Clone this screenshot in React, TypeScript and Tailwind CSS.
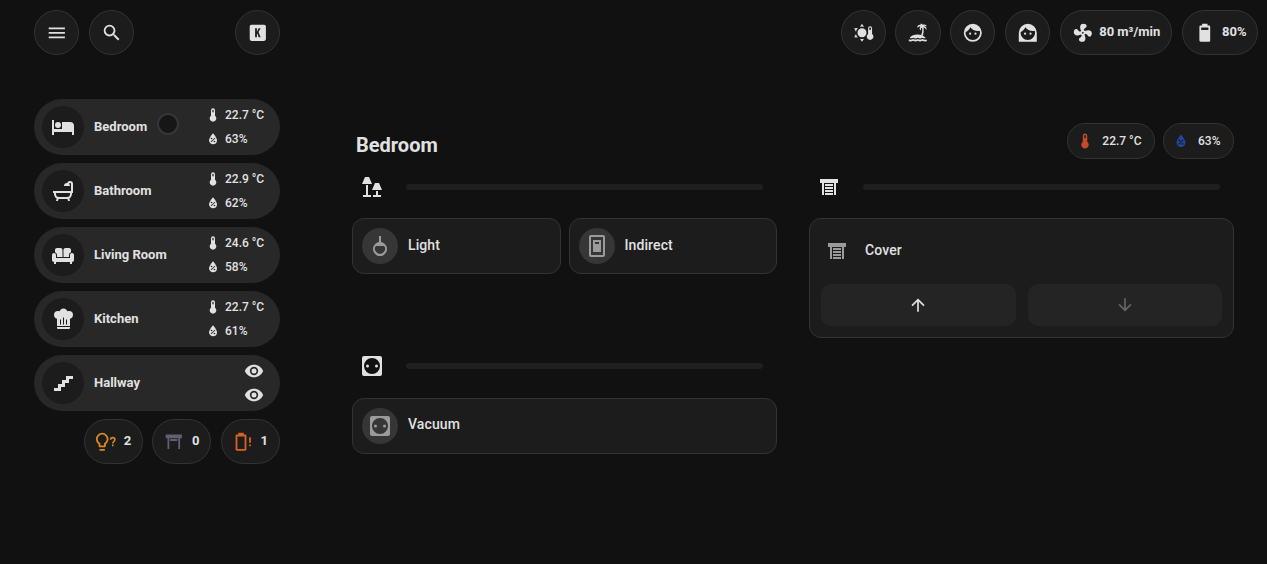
import type { ReactNode } from "react";

const paths = {
  menu: "M3,6H21V8H3V6M3,11H21V13H3V11M3,16H21V18H3V16Z",
  magnify:
    "M9.5,3A6.5,6.5 0 0,1 16,9.5C16,11.11 15.41,12.59 14.44,13.73L14.71,14H15.5L20.5,19L19,20.5L14,15.5V14.71L13.73,14.44C12.59,15.41 11.11,16 9.5,16A6.5,6.5 0 0,1 3,9.5A6.5,6.5 0 0,1 9.5,3M9.5,5C7,5 5,7 5,9.5C5,12 7,14 9.5,14C12,14 14,12 14,9.5C14,7 12,5 9.5,5Z",
  keyBox:
    "M5,3H19A2,2 0 0,1 21,5V19A2,2 0 0,1 19,21H5A2,2 0 0,1 3,19V5A2,2 0 0,1 5,3M9,7V17H11V13.67L11.5,12.8L13,17H15.1L12.8,11L15.1,7H13L11,10.8V7H9Z",
  sunThermo:
    "M10,7A5,5 0 1,1 10,17A5,5 0 1,1 10,7M10,2L12.3,5.5A7,7 0 0,0 7.7,5.5L10,2M10,22L12.3,18.5A7,7 0 0,1 7.7,18.5L10,22M1.3,7L5.5,6.7A7,7 0 0,0 3.3,10.7L1.3,7M1.3,17L5.5,17.3A7,7 0 0,1 3.3,13.3L1.3,17M21.2,13.2V7A2.2,2.2 0 0,0 16.8,7V13.2A3.7,3.7 0 1,0 21.2,13.2M19,6A1,1 0 0,1 20,7V8.5H18V7A1,1 0 0,1 19,6Z",
  island:
    "M15,2C16.3,1.6 17.2,2.3 17.6,3.2C19,2.4 21.2,2.7 22,5C20.7,4.2 19.8,4.2 19,4.4C21,4.9 22.3,6.5 21.5,9C20.8,7.2 19.6,6.2 18.3,5.8C18.8,8.6 18.5,11.8 17.7,15H15.6C16.8,11.9 17.3,8.7 16.7,6C15.7,6.8 15.2,8 15.2,9.6C13.5,7.8 14,6 15,5C13.3,4.8 12.2,5.5 11.4,6.6C11.2,4.2 13,2.9 15.2,3.2L15,2M3,17.5C5,14.8 8,13.8 11.5,13.8C15.5,13.8 18.8,15 20.8,17.7C19.4,18.4 18.3,18.2 17,17.4C15.3,18.6 13.6,18.6 12,17.4C10.3,18.6 8.6,18.6 7,17.4C5.6,18.3 4.3,18.4 3,17.5M2,19.5C3.7,19.8 5.2,19.7 7,18.8C8.7,19.8 10.4,19.8 12,18.8C13.7,19.8 15.4,19.8 17,18.8C18.7,19.7 20.3,19.9 22,19.5V21.5C20.3,21.8 18.7,21.7 17,20.9C15.4,21.8 13.7,21.8 12,20.9C10.4,21.8 8.7,21.8 7,20.9C5.3,21.7 3.7,21.8 2,21.5Z",
  man: "M9,11.75A1.25,1.25 0 0,0 7.75,13A1.25,1.25 0 0,0 9,14.25A1.25,1.25 0 0,0 10.25,13A1.25,1.25 0 0,0 9,11.75M15,11.75A1.25,1.25 0 0,0 13.75,13A1.25,1.25 0 0,0 15,14.25A1.25,1.25 0 0,0 16.25,13A1.25,1.25 0 0,0 15,11.75M12,2A10,10 0 0,0 2,12A10,10 0 0,0 12,22A10,10 0 0,0 22,12A10,10 0 0,0 12,2M12,20C7.59,20 4,16.41 4,12C4,11.71 4,11.42 4.05,11.14C6.41,10.09 8.28,8.16 9.26,5.77C11.07,8.33 14.05,10 17.42,10C18.2,10 18.95,9.91 19.67,9.74C19.88,10.45 20,11.21 20,12C20,16.41 16.41,20 12,20Z",
  woman:
    "M9,11.75A1.25,1.25 0 0,0 7.75,13A1.25,1.25 0 0,0 9,14.25A1.25,1.25 0 0,0 10.25,13A1.25,1.25 0 0,0 9,11.75M15,11.75A1.25,1.25 0 0,0 13.75,13A1.25,1.25 0 0,0 15,14.25A1.25,1.25 0 0,0 16.25,13A1.25,1.25 0 0,0 15,11.75M12,2A10,10 0 0,0 2,12V22H22V12A10,10 0 0,0 12,2M12,20C7.59,20 4,16.41 4,12C4,11.71 4,11.42 4.05,11.14C6.41,10.09 8.28,8.16 9.26,5.77C11.07,8.33 14.05,10 17.42,10C18.2,10 18.95,9.91 19.67,9.74C19.88,10.45 20,11.21 20,12C20,16.41 16.41,20 12,20Z",
  fan: "M12,11A1,1 0 0,0 11,12A1,1 0 0,0 12,13A1,1 0 0,0 13,12A1,1 0 0,0 12,11M12.5,2C17,2 17.11,5.57 14.75,6.75C13.76,7.24 13.32,8.29 13.13,9.22C13.61,9.42 14.03,9.73 14.35,10.13C18.05,8.13 22.03,8.92 22.03,12.5C22.03,17 18.46,17.1 17.28,14.73C16.78,13.74 15.72,13.3 14.79,13.11C14.59,13.59 14.28,14 13.88,14.34C15.87,18.03 15.08,22 11.5,22C7,22 6.91,18.42 9.27,17.24C10.25,16.75 10.69,15.71 10.89,14.79C10.4,14.59 9.97,14.27 9.65,13.87C5.96,15.85 2,15.07 2,11.5C2,7 5.56,6.89 6.74,9.26C7.24,10.25 8.29,10.68 9.22,10.87C9.41,10.39 9.73,9.97 10.14,9.65C8.15,5.96 8.94,2 12.5,2Z",
  battery:
    "M16,9H8V6H16M16.67,4H15V2H9V4H7.33A1.33,1.33 0 0,0 6,5.33V20.67C6,21.4 6.6,22 7.33,22H16.67A1.33,1.33 0 0,0 18,20.67V5.33C18,4.6 17.4,4 16.67,4Z",
  thermometer:
    "M15,13V5A3,3 0 0,0 9,5V13A5,5 0 1,0 15,13M12,4A1,1 0 0,1 13,5V8H11V5A1,1 0 0,1 12,4Z",
  humidity:
    "M12,3.25C12,3.25 6,10 6,14C6,17.32 8.69,20 12,20A6,6 0 0,0 18,14C18,10 12,3.25 12,3.25M14.47,9.97L15.53,11.03L9.53,17.03L8.47,15.97M9.75,10A1.25,1.25 0 0,1 11,11.25A1.25,1.25 0 0,1 9.75,12.5A1.25,1.25 0 0,1 8.5,11.25A1.25,1.25 0 0,1 9.75,10M14.25,14.5A1.25,1.25 0 0,1 15.5,15.75A1.25,1.25 0 0,1 14.25,17A1.25,1.25 0 0,1 13,15.75A1.25,1.25 0 0,1 14.25,14.5Z",
  bed: "M19,7H11V14H3V5H1V20H3V17H21V20H23V11A4,4 0 0,0 19,7M7,13A3,3 0 0,0 10,10A3,3 0 0,0 7,7A3,3 0 0,0 4,10A3,3 0 0,0 7,13Z",
  bath: "M21,14V15C21,16.91 19.93,18.57 18.35,19.41L19,22H17L16.5,20C16.33,20 16.17,20 16,20H8C7.83,20 7.67,20 7.5,20L7,22H5L5.65,19.41C4.07,18.57 3,16.91 3,15V14H2V12H20V5A1,1 0 0,0 19,4C18.5,4 18.12,4.34 18,4.79C18.63,5.33 19,6.13 19,7H13A3,3 0 0,1 16,4C16.06,4 16.11,4 16.17,4C16.58,2.84 17.69,2 19,2A3,3 0 0,1 22,5V14H21M19,14H5V15A3,3 0 0,0 8,18H16A3,3 0 0,0 19,15V14Z",
  sofa: "M12.5,7C12.5,5.89 13.39,5 14.5,5H18C19.1,5 20,5.9 20,7V9.16C18.84,9.57 18,10.67 18,11.97V14H12.5V7M6,11.96V14H11.5V7C11.5,5.89 10.61,5 9.5,5H6C4.9,5 4,5.9 4,7V9.15C5.16,9.56 6,10.67 6,11.96M20.66,10.03C19.68,10.19 19,11.12 19,12.12V15H5V12C5,10.9 4.11,10 3,10S1,10.9 1,12V17C1,18.1 1.9,19 3,19V21H5V19H19V21H21V19C22.1,19 23,18.1 23,17V12C23,10.79 21.91,9.82 20.66,10.03Z",
  chef: "M12.5,1.5C10.73,1.5 9.17,2.67 8.67,4.37C8.14,4.13 7.58,4 7,4A4,4 0 0,0 3,8C3,9.82 4.24,11.41 6,11.87V19H19V11.87C20.76,11.41 22,9.82 22,8A4,4 0 0,0 18,4C17.42,4 16.86,4.13 16.33,4.37C15.83,2.67 14.27,1.5 12.5,1.5M12,10.5H13V17.5H12V10.5M9,12.5H10V17.5H9V12.5M15,12.5H16V17.5H15V12.5M6,20V21A1,1 0 0,0 7,22H18A1,1 0 0,0 19,21V20H6Z",
  stairs: "M15,5V9H11V13H7V17H3V20H10V16H14V12H18V8H22V5H15Z",
  eye: "M12,9A3,3 0 0,0 9,12A3,3 0 0,0 12,15A3,3 0 0,0 15,12A3,3 0 0,0 12,9M12,17A5,5 0 0,1 7,12A5,5 0 0,1 12,7A5,5 0 0,1 17,12A5,5 0 0,1 12,17M12,4.5C7,4.5 2.73,7.61 1,12C2.73,16.39 7,19.5 12,19.5C17,19.5 21.27,16.39 23,12C21.27,7.61 17,4.5 12,4.5Z",
  bulbQuestion:
    "M8,2A7,7 0 0,1 15,9C15,11.38 13.81,13.47 12,14.74V17A1,1 0 0,1 11,18H5A1,1 0 0,1 4,17V14.74C2.19,13.47 1,11.38 1,9A7,7 0 0,1 8,2M5,21V20H11V21A1,1 0 0,1 10,22H6A1,1 0 0,1 5,21M8,4A5,5 0 0,0 3,9C3,11.05 4.23,12.81 6,13.58V16H10V13.58C11.77,12.81 13,11.05 13,9A5,5 0 0,0 8,4M18.9,15H20.7V17H18.9V15M16.4,9.7A3.3,3.3 0 0,1 23,9.7C23,11.7 20.7,12 20.7,14H18.9C18.9,11.4 21.2,11.2 21.2,9.7A1.5,1.5 0 0,0 18.2,9.7Z",
  shutterOpen: "M3,4H21V8H19V20H17V8H7V20H5V8H3V4M8,9H16V11H8V9Z",
  shutter:
    "M3,4H21V8H19V20H17V8H7V20H5V8H3V4M8,9H16V11H8V9M8,12H16V14H8V12M8,15H16V17H8V15M8,18H16V20H8V18Z",
  batteryAlert:
    "M14,20H6V6H14M14.67,4H13V2H7V4H5.33C4.6,4 4,4.6 4,5.33V20.67C4,21.4 4.6,22 5.33,22H14.67C15.4,22 16,21.4 16,20.67V5.33C16,4.6 15.4,4 14.67,4M21,7H19V13H21V7M21,15H19V17H21V15Z",
  lamps:
    "M5,2H9L12,9H2L5,2M6,10H8V20H11V22H3V20H6V10M15,8H19L22,15H12L15,8M16,16H18V20H21V22H13V20H16V16Z",
  outlet:
    "M4,2H20A2,2 0 0,1 22,4V20A2,2 0 0,1 20,22H4A2,2 0 0,1 2,20V4A2,2 0 0,1 4,2M12,4A8,8 0 0,0 4,12A8,8 0 0,0 12,20A8,8 0 0,0 20,12A8,8 0 0,0 12,4M7.5,10.5A1.5,1.5 0 1,1 7.5,13.5A1.5,1.5 0 1,1 7.5,10.5M16.5,10.5A1.5,1.5 0 1,1 16.5,13.5A1.5,1.5 0 1,1 16.5,10.5Z",
  pendant:
    "M11,2H13V8.07A7,7 0 1,1 11,8.07V2M7.8,12A5,5 0 1,0 16.2,12H7.8Z",
  wallSwitch:
    "M6,1H18A2,2 0 0,1 20,3V21A2,2 0 0,1 18,23H6A2,2 0 0,1 4,21V3A2,2 0 0,1 6,1M6,3V21H18V3H6M8,6H16V18H8V6M10,8V10H14V8H10Z",
  up: "M13,20H11V8L5.5,13.5L4.08,12.08L12,4.16L19.92,12.08L18.5,13.5L13,8V20Z",
  down: "M11,4H13V16L18.5,10.5L19.92,11.92L12,19.84L4.08,11.92L5.5,10.5L11,16V4Z",
};

type IconName = keyof typeof paths;

function Icon({ name, className = "size-6" }: { name: IconName; className?: string }) {
  return (
    <svg viewBox="0 0 24 24" fill="currentColor" fillRule="evenodd" className={`block shrink-0 ${className}`}>
      <path d={paths[name]} />
    </svg>
  );
}

const chip = "flex h-[45px] shrink-0 items-center rounded-full border border-[#333333] bg-[#1c1c1c]";

function RoundButton({ icon, width = "w-[45px]" }: { icon: IconName; width?: string }) {
  return (
    <button className={`${chip} ${width} justify-center`}>
      <Icon name={icon} className="size-[21.6px]" />
    </button>
  );
}

type Room = { name: string; icon: IconName; temperature?: string; humidity?: string; dot?: boolean };

const rooms: Room[] = [
  { name: "Bedroom", icon: "bed", temperature: "22.7 °C", humidity: "63%", dot: true },
  { name: "Bathroom", icon: "bath", temperature: "22.9 °C", humidity: "62%" },
  { name: "Living Room", icon: "sofa", temperature: "24.6 °C", humidity: "58%" },
  { name: "Kitchen", icon: "chef", temperature: "22.7 °C", humidity: "61%" },
  { name: "Hallway", icon: "stairs" },
];

function Reading({ icon, value }: { icon: IconName; value: string }) {
  return (
    <div className="flex h-6 items-center gap-1">
      <Icon name={icon} className="size-4" />
      <span className="text-xs font-medium">{value}</span>
    </div>
  );
}

function RoomRow({ room }: { room: Room }) {
  return (
    <div className="flex h-14 items-center rounded-[28px] bg-[#282828] pl-2">
      <div className="flex size-[42px] items-center justify-center rounded-full bg-[#1c1c1c]">
        <Icon name={room.icon} />
      </div>
      <span className="ml-2.5 text-[13px] font-bold">{room.name}</span>
      {room.dot && (
        <span className="mb-1.5 ml-[10px] size-[22px] rounded-full border-2 border-[#36363a] bg-[#161616]" />
      )}
      {room.temperature && room.humidity ? (
        <div className="ml-auto flex w-[75px] flex-col">
          <Reading icon="thermometer" value={room.temperature} />
          <Reading icon="humidity" value={room.humidity} />
        </div>
      ) : (
        <div className="mr-4 ml-auto flex flex-col gap-1">
          <Icon name="eye" className="size-5" />
          <Icon name="eye" className="size-5" />
        </div>
      )}
    </div>
  );
}

function CountPill({ icon, color, count }: { icon: IconName; color: string; count: number }) {
  return (
    <div className={`${chip} w-[59px] pl-[10px] text-[13px] font-bold`}>
      <Icon name={icon} className={`size-[21.6px] ${color}`} />
      <span className="-mt-0.5 ml-[7px]">{count}</span>
    </div>
  );
}

function SectionHeader({ icon }: { icon: IconName }) {
  return (
    <div className="flex h-6 items-center pr-3.5 pl-2">
      <Icon name={icon} />
      <div className="ml-[22px] h-1.5 flex-1 rounded-full bg-[#1f1f1f]" />
    </div>
  );
}

function DeviceCard({ icon, name, raised }: { icon: IconName; name: string; raised?: boolean }) {
  return (
    <div className="flex h-14 min-w-0 flex-1 items-center rounded-xl border border-[#333333] bg-[#1c1c1c] pl-[9px]">
      <div className="flex size-9 items-center justify-center rounded-full bg-[#363636] text-[#9b9b9b]">
        <Icon name={icon} />
      </div>
      <span className={`${raised ? "mb-1" : "mb-0.5"} ml-2.5 text-sm font-medium tracking-[0.1px]`}>{name}</span>
    </div>
  );
}

function Badge({ icon, color, children }: { icon: IconName; color: string; children: ReactNode }) {
  return (
    <div className="flex h-9 items-center rounded-full border border-[#333333] bg-[#1c1c1c] pr-[12.5px] pl-2 text-xs font-medium">
      <Icon name={icon} className={`size-[18px] ${color}`} />
      <span className="ml-2">{children}</span>
    </div>
  );
}

export default function App() {
  return (
    <div className="flex h-[564px] w-[1267px] flex-col overflow-hidden bg-[#111111] font-['Roboto',sans-serif] text-[#e1e1e1]">
      <header className="flex h-[55px] shrink-0 items-end justify-between pr-[9px] pl-[34px]">
        <div className="flex w-[246px] gap-[10px]">
          <RoundButton icon="menu" />
          <RoundButton icon="magnify" />
          <div className="ml-auto">
            <RoundButton icon="keyBox" />
          </div>
        </div>
        <div className="flex gap-[10px] text-[13px] font-bold">
          <div className="flex gap-[9px]">
            <RoundButton icon="sunThermo" />
            <RoundButton icon="island" width="w-[46px]" />
            <RoundButton icon="man" />
          </div>
          <RoundButton icon="woman" />
          <div className={`${chip} w-[112px] pl-[11px]`}>
            <Icon name="fan" className="size-[21.6px]" />
            <span className="-mt-0.5 ml-[5.6px] whitespace-nowrap">80 m³/min</span>
          </div>
          <div className={`${chip} w-[76px] pl-[11px]`}>
            <Icon name="battery" className="size-[21.6px]" />
            <span className="-mt-0.5 ml-[6.4px]">80%</span>
          </div>
        </div>
      </header>

      <div className="flex flex-1 pl-[34px]">
        <aside className="w-[246px] shrink-0 pt-11">
          <div className="flex flex-col gap-2">
            {rooms.map((room) => (
              <RoomRow key={room.name} room={room} />
            ))}
          </div>
          <div className="mt-2 flex justify-end gap-[9.7px]">
            <div className="flex gap-[9.2px]">
              <CountPill icon="bulbQuestion" color="text-[#d98a1e]" count={2} />
              <CountPill icon="shutterOpen" color="text-[#625f73]" count={0} />
            </div>
            <CountPill icon="batteryAlert" color="text-[#db6322]" count={1} />
          </div>
        </aside>

        <main className="ml-[72px] w-[882px] pt-[68px]">
          <div className="flex h-9 items-start justify-between">
            <h1 className="mt-2 ml-1 text-xl leading-7 font-bold">Bedroom</h1>
            <div className="flex gap-2">
              <Badge icon="thermometer" color="text-[#c44a28]">22.7 °C</Badge>
              <Badge icon="humidity" color="text-[#20479a]">63%</Badge>
            </div>
          </div>

          <div className="mt-4 grid grid-cols-[425px_425px] gap-x-8">
            <section>
              <SectionHeader icon="lamps" />
              <div className="mt-[19px] flex gap-2">
                <DeviceCard icon="pendant" name="Light" />
                <DeviceCard icon="wallSwitch" name="Indirect" />
              </div>
            </section>
            <section>
              <SectionHeader icon="shutter" />
              <div className="mt-[19px] h-[120px] rounded-xl border border-[#333333] bg-[#1c1c1c] px-[11px] pt-5">
                <div className="flex h-6 items-center pl-1">
                  <Icon name="shutter" className="size-6 text-[#9b9b9b]" />
                  <span className="mb-0.5 ml-4 text-sm font-medium tracking-[0.1px]">Cover</span>
                </div>
                <div className="mt-[21px] flex gap-3">
                  <button className="flex h-[42px] flex-1 items-center justify-center rounded-[10px] bg-[#242424]">
                    <Icon name="up" className="size-5" />
                  </button>
                  <button className="flex h-[42px] flex-1 items-center justify-center rounded-[10px] bg-[#242424] text-[#65636c]">
                    <Icon name="down" className="size-5" />
                  </button>
                </div>
              </div>
            </section>
            <section className="mt-4">
              <SectionHeader icon="outlet" />
              <div className="mt-5 flex">
                <DeviceCard icon="outlet" name="Vacuum" raised />
              </div>
            </section>
          </div>
        </main>
      </div>
    </div>
  );
}
